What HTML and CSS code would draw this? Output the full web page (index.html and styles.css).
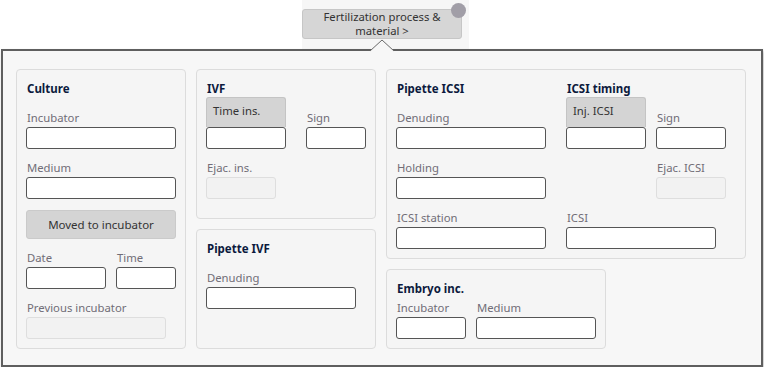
FILE: index.html
```html
<!DOCTYPE html>
<html lang="en">
<head>
    <meta charset="UTF-8">
    <meta name="viewport" content="width=device-width, initial-scale=1.0">
    <title>Fertilization process &amp; material</title>
    <link rel="stylesheet" href="styles.css">
</head>
<body>
    <div class="topbar">
        <div class="tab">
            <button type="button" class="step">Fertilization process &amp;<br>material &gt;</button>
            <span class="dot"></span>
        </div>
    </div>

    <div class="popup">
        <svg class="notch" width="24" height="13" viewBox="0 0 24 13">
            <polygon points="0,13 0,12 12,1 24,12 24,13" fill="#f7f7f7"/>
            <polyline points="0,12 12,1 24,12" fill="none" stroke="#6a6a6a" stroke-width="1"/>
        </svg>

        <div class="cards">
            <section class="card culture">
                <h3>Culture</h3>
                <div class="field first">
                    <label>Incubator</label>
                    <input type="text" class="w150">
                </div>
                <div class="field">
                    <label>Medium</label>
                    <input type="text" class="w150">
                </div>
                <button type="button" class="action">Moved to incubator</button>
                <div class="row">
                    <div class="field">
                        <label>Date</label>
                        <input type="text" class="w80">
                    </div>
                    <div class="field">
                        <label>Time</label>
                        <input type="text" class="w60">
                    </div>
                </div>
                <div class="field">
                    <label>Previous incubator</label>
                    <input type="text" class="w140" disabled>
                </div>
            </section>

            <div class="stack">
                <section class="card ivf">
                    <h3>IVF</h3>
                    <div class="row wide">
                        <div class="stamp">
                            <div class="stamp-head">Time ins.</div>
                            <input type="text" class="w80">
                        </div>
                        <div class="field first">
                            <label>Sign</label>
                            <input type="text" class="w60">
                        </div>
                    </div>
                    <div class="field">
                        <label>Ejac. ins.</label>
                        <input type="text" class="w70" disabled>
                    </div>
                </section>

                <section class="card pipette-ivf">
                    <h3>Pipette IVF</h3>
                    <div class="field first">
                        <label>Denuding</label>
                        <input type="text" class="w150">
                    </div>
                </section>
            </div>

            <div class="stack">
                <section class="card icsi">
                    <h3>Pipette ICSI</h3>
                    <h3 class="span2">ICSI timing</h3>

                    <div class="field first">
                        <label>Denuding</label>
                        <input type="text" class="w150">
                    </div>
                    <div class="stamp">
                        <div class="stamp-head">Inj. ICSI</div>
                        <input type="text" class="w80">
                    </div>
                    <div class="field first">
                        <label>Sign</label>
                        <input type="text" class="w70">
                    </div>

                    <div class="field">
                        <label>Holding</label>
                        <input type="text" class="w150">
                    </div>
                    <div></div>
                    <div class="field">
                        <label>Ejac. ICSI</label>
                        <input type="text" class="w70" disabled>
                    </div>

                    <div class="field">
                        <label>ICSI station</label>
                        <input type="text" class="w150">
                    </div>
                    <div class="field span2">
                        <label>ICSI</label>
                        <input type="text" class="w150">
                    </div>
                </section>

                <section class="card embryo">
                    <h3>Embryo inc.</h3>
                    <div class="row">
                        <div class="field tight">
                            <label>Incubator</label>
                            <input type="text" class="w70">
                        </div>
                        <div class="field tight">
                            <label>Medium</label>
                            <input type="text" class="w120">
                        </div>
                    </div>
                </section>
            </div>
        </div>
    </div>
</body>
</html>
```

FILE: styles.css
```css
body {
    margin: 0;
    background-color: #fff;
    font-family: "Noto Sans", "Open Sans", sans-serif;
    font-size: 11.3px;
    color: #333;
}
.topbar {
    height: 49px;
}
.tab {
    position: relative;
    margin-left: 302px;
    width: 167px;
    height: 49px;
    padding-top: 9px;
    box-sizing: border-box;
    background-color: #f6f6f6;
}
.step {
    display: block;
    width: 160px;
    height: 30px;
    padding: 0;
    font-family: inherit;
    font-size: 11.3px;
    line-height: 14px;
    color: #333;
    background-color: #d6d6d6;
    border: 1px solid #c6c6c6;
    border-radius: 3px;
}
.dot {
    position: absolute;
    left: 149px;
    top: 3px;
    width: 15px;
    height: 15px;
    border-radius: 50%;
    background-color: #a19ea7;
}
.popup {
    position: relative;
    margin-left: 1px;
    width: 762px;
    height: 318px;
    box-sizing: border-box;
    padding: 18px 0 0 13px;
    background-color: #f7f7f7;
    border: 2px solid #5f5f5f;
    box-shadow: 1px 2px 3px rgba(0, 0, 0, 0.25);
}
.notch {
    position: absolute;
    left: 367px;
    top: -12px;
}
.cards {
    display: flex;
    gap: 10px;
}
.stack {
    display: flex;
    flex-direction: column;
    gap: 10px;
}
.card {
    box-sizing: border-box;
    padding: 9px;
    background-color: #f5f5f5;
    border: 1px solid #dcdcdc;
    border-radius: 4px;
}
.culture {
    width: 170px;
    height: 280px;
}
.ivf {
    width: 180px;
    height: 150px;
}
.pipette-ivf {
    width: 180px;
    height: 120px;
}
.icsi {
    width: 360px;
    height: 190px;
    display: grid;
    grid-template-columns: 170px 90px 70px;
    align-content: start;
}
.embryo {
    width: 220px;
    height: 80px;
}
h3 {
    margin: 0;
    height: 17px;
    padding: 1px 0 0 1px;
    font-size: 11.5px;
    line-height: 17px;
    font-weight: bold;
    color: #0c1a3d;
}
.span2 {
    grid-column: span 2;
}
.row {
    display: flex;
    gap: 10px;
}
.row.wide {
    gap: 20px;
}
.field label {
    display: flex;
    align-items: flex-end;
    height: 28px;
    box-sizing: border-box;
    padding: 0 0 1px 1px;
    line-height: 16px;
    color: #716d77;
}
.field.first label {
    height: 30px;
}
.field.tight label {
    height: 20px;
}
input {
    display: block;
    height: 22px;
    box-sizing: border-box;
    margin: 0;
    padding: 2px 4px;
    background-color: #fff;
    border: 1px solid #555;
    border-radius: 3px;
}
input:disabled {
    background-color: #f2f2f2;
    border-color: #dedede;
}
.w60 { width: 60px; }
.w70 { width: 70px; }
.w80 { width: 80px; }
.w120 { width: 120px; }
.w140 { width: 140px; }
.w150 { width: 150px; }
.stamp-head {
    width: 80px;
    height: 30px;
    box-sizing: border-box;
    padding: 5px 6px 0;
    line-height: 16px;
    color: #333;
    background-color: #d4d4d4;
    border: 1px solid #c4c4c4;
    border-bottom: none;
    border-radius: 3px 3px 0 0;
}
.action {
    display: block;
    width: 150px;
    height: 29px;
    margin-top: 11px;
    font-family: inherit;
    font-size: 11.5px;
    color: #333;
    background-color: #d4d4d4;
    border: 1px solid #cacaca;
    border-radius: 3px;
}
```
